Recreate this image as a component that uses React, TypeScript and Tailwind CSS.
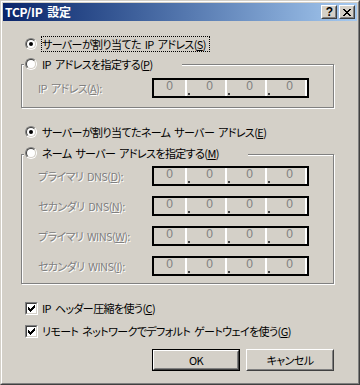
import React from 'react';

const face = "font-['Noto_Sans_CJK_JP',sans-serif] [font-feature-settings:'palt'] text-[11px] leading-[16px] tracking-[-0.6px] [word-spacing:2px] whitespace-nowrap";
const off = "text-[#808080] [text-shadow:1px_1px_0_#fff]";

const CHECK = [
  [6, 0], [5, 1], [6, 1], [0, 2], [4, 2], [5, 2], [6, 2], [0, 3], [1, 3], [3, 3], [4, 3], [5, 3],
  [0, 4], [1, 4], [2, 4], [3, 4], [4, 4], [1, 5], [2, 5], [3, 5], [2, 6],
];

const CROSS = [
  [0, 0], [1, 0], [6, 0], [7, 0], [1, 1], [2, 1], [5, 1], [6, 1], [2, 2], [3, 2], [4, 2], [5, 2],
  [3, 3], [4, 3], [2, 4], [3, 4], [4, 4], [5, 4], [1, 5], [2, 5], [5, 5], [6, 5], [0, 6], [1, 6], [6, 6], [7, 6],
];

function Pixels({ cells, w, h }: { cells: number[][]; w: number; h: number }) {
  return (
    <svg width={w} height={h} viewBox={`0 0 ${w} ${h}`} shapeRendering="crispEdges" className="block">
      {cells.map(([x, y]) => (
        <rect key={`${x}-${y}`} x={x} y={y} width="1" height="1" fill="#000" />
      ))}
    </svg>
  );
}

function Radio({ checked }: { checked?: boolean }) {
  return (
    <span className="block w-[12px] h-[12px] shrink-0 rounded-full border border-t-[#808080] border-l-[#808080] border-b-white border-r-white">
      <span className="flex items-center justify-center w-full h-full rounded-full border border-t-[#404040] border-l-[#404040] border-b-[#d4d0c8] border-r-[#d4d0c8] bg-white">
        {checked && <span className="block w-[4px] h-[4px] rounded-full bg-black" />}
      </span>
    </span>
  );
}

function Checkbox() {
  return (
    <span className="block w-[13px] h-[13px] shrink-0 border border-t-[#808080] border-l-[#808080] border-b-white border-r-white">
      <span className="block w-full h-full border border-t-[#404040] border-l-[#404040] border-b-[#d4d0c8] border-r-[#d4d0c8] bg-white p-[1px]">
        <Pixels cells={CHECK} w={7} h={7} />
      </span>
    </span>
  );
}

function IpField() {
  return (
    <div className="flex h-[20px] w-[157px] shrink-0 border-2 border-black bg-[#d4d0c8]">
      {[0, 1, 2, 3].map((i) => (
        <React.Fragment key={i}>
          {i > 0 && (
            <div className="flex w-[7px] flex-col justify-end pb-[1px] pl-[1px]">
              <span className="block w-[2px] h-[2px] bg-[#404040]" />
            </div>
          )}
          <div className="flex w-[33px]">
            <span className="flex-1 text-center font-['Liberation_Sans',sans-serif] text-[12px] leading-[12px] tracking-[0px] text-[#808080]">0</span>
            <span className="block w-[2px] bg-white" />
          </div>
        </React.Fragment>
      ))}
    </div>
  );
}

function FieldRow({ label, k, rest }: { label: string; k: string; rest: string }) {
  return (
    <div className="flex h-[20px] items-center pl-[16px]">
      <span className={`w-[114px] ${off}`}>
        {label}(<u>{k}</u>){rest}
      </span>
      <IpField />
    </div>
  );
}

function WinButton({ children, primary }: { children: React.ReactNode; primary?: boolean }) {
  const raised = (
    <span className="flex h-full w-full border border-t-white border-l-white border-b-[#404040] border-r-[#404040]">
      <span className="flex h-full w-full items-center justify-center border border-t-[#d4d0c8] border-l-[#d4d0c8] border-b-[#808080] border-r-[#808080] text-black">
        {children}
      </span>
    </span>
  );
  return (
    <div className={`h-[22px] w-[88px] ${primary ? 'border border-black' : ''}`}>{raised}</div>
  );
}

function CaptionButton({ children }: { children: React.ReactNode }) {
  return (
    <span className="block h-[14px] w-[16px] border border-t-white border-l-white border-b-[#404040] border-r-[#404040] bg-[#d4d0c8]">
      <span className="flex h-full w-full items-center justify-center border border-t-[#d4d0c8] border-l-[#d4d0c8] border-b-[#808080] border-r-[#808080]">
        {children}
      </span>
    </span>
  );
}

export default function App() {
  return (
    <div className={`w-[360px] h-[385px] border border-t-[#d4d0c8] border-l-[#d4d0c8] border-b-[#404040] border-r-[#404040] ${face}`}>
      <div className="flex h-full flex-col border border-t-white border-l-white border-b-[#808080] border-r-[#808080] bg-[#d4d0c8] p-[1px]">
        {/* title bar */}
        <div className="flex h-[18px] items-center justify-between bg-gradient-to-r from-[#0a246a] to-[#a6caf0] pl-[2px] pr-[2px]">
          <span className="text-[12px] font-bold text-white tracking-[-0.2px]">TCP/IP 設定</span>
          <div className="flex gap-[2px]">
            <CaptionButton>
              <span className="font-['Liberation_Sans',sans-serif] text-[12px] font-bold leading-[10px] text-black">?</span>
            </CaptionButton>
            <CaptionButton>
              <Pixels cells={CROSS} w={8} h={7} />
            </CaptionButton>
          </div>
        </div>

        <div className="flex flex-col pl-[18px] text-black">
          {/* IP address */}
          <div className="mt-[15px] flex h-[16px] items-center pl-[4px]">
            <Radio checked />
            <span className="ml-[4px] flex h-[16px] items-center border border-dotted border-black pr-[3px]">
              サーバーが割り当てた IP アドレス(<u>S</u>)
            </span>
          </div>

          <div className="relative mt-[12px] h-[44px] w-[313px] border border-[#808080] shadow-[inset_1px_1px_0_#fff,1px_1px_0_#fff]">
            <div className="absolute -top-[9px] left-[2px] flex h-[16px] w-[158px] items-center bg-[#d4d0c8] pl-[1px]">
              <Radio />
              <span className="ml-[5px]">IP アドレスを指定する(<u>P</u>)</span>
            </div>
            <div className="mt-[13px]">
              <FieldRow label="IP アドレス" k="A" rest=":" />
            </div>
          </div>

          {/* DNS / WINS */}
          <div className="mt-[16px] flex h-[16px] items-center pl-[4px]">
            <Radio checked />
            <span className="ml-[5px]">サーバーが割り当てたネーム サーバー アドレス(<u>E</u>)</span>
          </div>

          <div className="relative mt-[14px] flex h-[130px] w-[313px] flex-col gap-[10px] border border-[#808080] pt-[11px] shadow-[inset_1px_1px_0_#fff,1px_1px_0_#fff]">
            <div className="absolute -top-[10px] left-[2px] flex h-[16px] w-[224px] items-center bg-[#d4d0c8] pl-[1px]">
              <Radio />
              <span className="ml-[5px]">ネーム サーバー アドレスを指定する(<u>M</u>)</span>
            </div>
            <FieldRow label="プライマリ DNS" k="D" rest=":" />
            <FieldRow label="セカンダリ DNS" k="N" rest=":" />
            <FieldRow label="プライマリ WINS" k="W" rest=":" />
            <FieldRow label="セカンダリ WINS" k="I" rest=":" />
          </div>

          {/* options */}
          <div className="mt-[16px] flex h-[16px] items-center pl-[4px]">
            <Checkbox />
            <span className="ml-[4px]">IP ヘッダー圧縮を使う(<u>C</u>)</span>
          </div>
          <div className="mt-[7px] flex h-[16px] items-center pl-[4px]">
            <Checkbox />
            <span className="ml-[4px]">リモート ネットワークでデフォルト ゲートウェイを使う(<u>G</u>)</span>
          </div>

          <div className="mt-[10px] flex w-[313px] justify-end gap-[6px]">
            <WinButton primary>OK</WinButton>
            <WinButton>キャンセル</WinButton>
          </div>
        </div>
      </div>
    </div>
  );
}
